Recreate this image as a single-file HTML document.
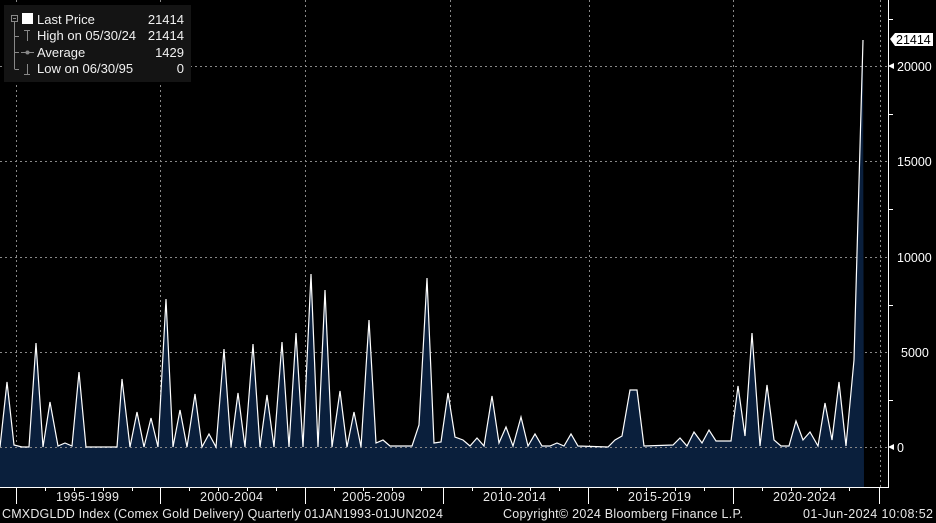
<!DOCTYPE html>
<html><head><meta charset="utf-8"><style>
body{margin:0;background:#000;width:936px;height:523px;overflow:hidden;font-family:"Liberation Sans",sans-serif;color:#e8e8e8}
svg{position:absolute;left:0;top:0}
</style></head><body>
<svg width="936" height="523" xmlns="http://www.w3.org/2000/svg" font-family="Liberation Sans, sans-serif">
<g stroke="#888" stroke-dasharray="2,3" stroke-width="1">
<line x1="0" y1="66.5" x2="888" y2="66.5"/><line x1="0" y1="161.5" x2="888" y2="161.5"/><line x1="0" y1="257.5" x2="888" y2="257.5"/><line x1="0" y1="352.5" x2="888" y2="352.5"/>
<line x1="16.5" y1="0" x2="16.5" y2="487"/><line x1="160.5" y1="0" x2="160.5" y2="487"/><line x1="305.5" y1="0" x2="305.5" y2="487"/><line x1="450.5" y1="0" x2="450.5" y2="487"/><line x1="589.5" y1="0" x2="589.5" y2="487"/><line x1="733.5" y1="0" x2="733.5" y2="487"/><line x1="880.5" y1="0" x2="880.5" y2="487"/>
</g>
<polygon fill="#0a1f3c" points="0,487 0,447 7,382 14,445 22,447 29,447 36,343 43,447 50,402 58,446 65,443 72,446 79,372 86,447 117,447 122,379 130,447 137,412 144,447 151,418 158,447 166,299 173,447 180,410 187,447 195,394 202,447 209,434 216,447 224,349 231,447 238,393 245,447 253,344 260,447 267,395 274,447 282,342 289,447 296,333 303,447 311,274 318,447 325,290 332,447 340,391 347,447 354,412 361,447 369,320 376,443 383,440 390,446 412,446 419,425 427,278 434,443 441,442 448,393 455,437 463,440 470,446 477,438 484,446 492,396 499,443 506,427 513,446 521,417 528,446 535,434 542,446 550,446 557,443 564,446 571,434 578,446 608,447 615,440 622,436 630,390 637,390 644,446 673,445 680,438 687,446 694,432 702,443 709,430 716,441 731,441 738,386 745,436 752,333 760,446 767,385 774,440 781,446 789,446 796,421 803,440 810,432 818,446 825,403 832,440 839,382 846,446 854,360 863,40 864,487"/>
<g stroke="#888" stroke-dasharray="2,3"><line x1="0" y1="447.5" x2="888" y2="447.5"/></g>
<polyline fill="none" stroke="#fff" stroke-width="1.2" points="0,447 7,382 14,445 22,447 29,447 36,343 43,447 50,402 58,446 65,443 72,446 79,372 86,447 117,447 122,379 130,447 137,412 144,447 151,418 158,447 166,299 173,447 180,410 187,447 195,394 202,447 209,434 216,447 224,349 231,447 238,393 245,447 253,344 260,447 267,395 274,447 282,342 289,447 296,333 303,447 311,274 318,447 325,290 332,447 340,391 347,447 354,412 361,447 369,320 376,443 383,440 390,446 412,446 419,425 427,278 434,443 441,442 448,393 455,437 463,440 470,446 477,438 484,446 492,396 499,443 506,427 513,446 521,417 528,446 535,434 542,446 550,446 557,443 564,446 571,434 578,446 608,447 615,440 622,436 630,390 637,390 644,446 673,445 680,438 687,446 694,432 702,443 709,430 716,441 731,441 738,386 745,436 752,333 760,446 767,385 774,440 781,446 789,446 796,421 803,440 810,432 818,446 825,403 832,440 839,382 846,446 854,360 863,40"/>
<g stroke="#fff" stroke-width="1">
<line x1="888.5" y1="0" x2="888.5" y2="487"/><line x1="0" y1="487.5" x2="889" y2="487.5"/>
<line x1="888" y1="19.5" x2="893" y2="19.5"/><line x1="888" y1="114.5" x2="893" y2="114.5"/><line x1="888" y1="209.5" x2="893" y2="209.5"/><line x1="888" y1="305.5" x2="893" y2="305.5"/><line x1="888" y1="400.5" x2="893" y2="400.5"/>
<line x1="16.5" y1="487" x2="16.5" y2="504"/><line x1="160.5" y1="487" x2="160.5" y2="504"/><line x1="305.5" y1="487" x2="305.5" y2="504"/><line x1="443.5" y1="487" x2="443.5" y2="504"/><line x1="588.5" y1="487" x2="588.5" y2="504"/><line x1="733.5" y1="487" x2="733.5" y2="504"/><line x1="879.5" y1="487" x2="879.5" y2="504"/>
<line x1="45.5" y1="487" x2="45.5" y2="491"/><line x1="74.5" y1="487" x2="74.5" y2="491"/><line x1="103.5" y1="487" x2="103.5" y2="491"/><line x1="132.5" y1="487" x2="132.5" y2="491"/>
<line x1="189.5" y1="487" x2="189.5" y2="491"/><line x1="218.5" y1="487" x2="218.5" y2="491"/><line x1="247.5" y1="487" x2="247.5" y2="491"/><line x1="276.5" y1="487" x2="276.5" y2="491"/>
<line x1="334.5" y1="487" x2="334.5" y2="491"/><line x1="363.5" y1="487" x2="363.5" y2="491"/><line x1="392.5" y1="487" x2="392.5" y2="491"/><line x1="421.5" y1="487" x2="421.5" y2="491"/>
<line x1="472.5" y1="487" x2="472.5" y2="491"/><line x1="501.5" y1="487" x2="501.5" y2="491"/><line x1="530.5" y1="487" x2="530.5" y2="491"/><line x1="559.5" y1="487" x2="559.5" y2="491"/>
<line x1="617.5" y1="487" x2="617.5" y2="491"/><line x1="646.5" y1="487" x2="646.5" y2="491"/><line x1="675.5" y1="487" x2="675.5" y2="491"/><line x1="704.5" y1="487" x2="704.5" y2="491"/>
<line x1="762.5" y1="487" x2="762.5" y2="491"/><line x1="791.5" y1="487" x2="791.5" y2="491"/><line x1="820.5" y1="487" x2="820.5" y2="491"/><line x1="849.5" y1="487" x2="849.5" y2="491"/>
</g>
<g fill="#fff" font-size="12.5">
<path d="M888,66 l6,-3 v6z M888,447 l6,-3 v6z"/>
<text x="897" y="71">20000</text><text x="897" y="166">15000</text><text x="897" y="262">10000</text><text x="901" y="357">5000</text><text x="897" y="452">0</text>
<path d="M890,39 l5,-6 h38 v13 h-38z"/>
<text x="896" y="44" fill="#000">21414</text>
<g fill="#e8e8e8">
<text x="56" y="501" textLength="63">1995-1999</text><text x="200" y="501" textLength="63">2000-2004</text><text x="342" y="501" textLength="63">2005-2009</text><text x="483" y="501" textLength="63">2010-2014</text><text x="628" y="501" textLength="63">2015-2019</text><text x="773" y="501" textLength="63">2020-2024</text>
<text x="2" y="518" textLength="441">CMXDGLDD Index (Comex Gold Delivery)  Quarterly 01JAN1993-01JUN2024</text>
<text x="503" y="518" textLength="240">Copyright© 2024 Bloomberg Finance L.P.</text>
<text x="803" y="518" textLength="130">01-Jun-2024 10:08:52</text>
</g>
</g>
<rect x="4" y="5" width="187" height="77" fill="#141414"/>
<g stroke="#888" fill="none" stroke-width="1">
<rect x="11.5" y="15.5" width="6" height="6"/><line x1="13" y1="18.5" x2="16" y2="18.5"/>
<line x1="14.5" y1="22" x2="14.5" y2="69"/><line x1="14.5" y1="36.5" x2="19" y2="36.5"/><line x1="14.5" y1="52.5" x2="19" y2="52.5"/><line x1="14.5" y1="69.5" x2="19" y2="69.5"/>
<line x1="24" y1="30.5" x2="30" y2="30.5"/><line x1="27.5" y1="30" x2="27.5" y2="41"/>
<line x1="21" y1="52.5" x2="34" y2="52.5"/><circle cx="27.5" cy="52.5" r="1.5" fill="#888"/>
<line x1="24" y1="74.5" x2="30" y2="74.5"/><line x1="27.5" y1="64" x2="27.5" y2="74"/>
</g>
<rect x="22" y="13" width="11" height="11" fill="#fff"/>
<g fill="#f0f0f0" font-size="13">
<text x="37" y="24">Last Price</text><text x="184" y="24" text-anchor="end">21414</text>
<text x="37" y="40">High on 05/30/24</text><text x="184" y="40" text-anchor="end">21414</text>
<text x="37" y="57">Average</text><text x="184" y="57" text-anchor="end">1429</text>
<text x="37" y="73">Low on 06/30/95</text><text x="184" y="73" text-anchor="end">0</text>
</g>
</svg>
</body></html>
